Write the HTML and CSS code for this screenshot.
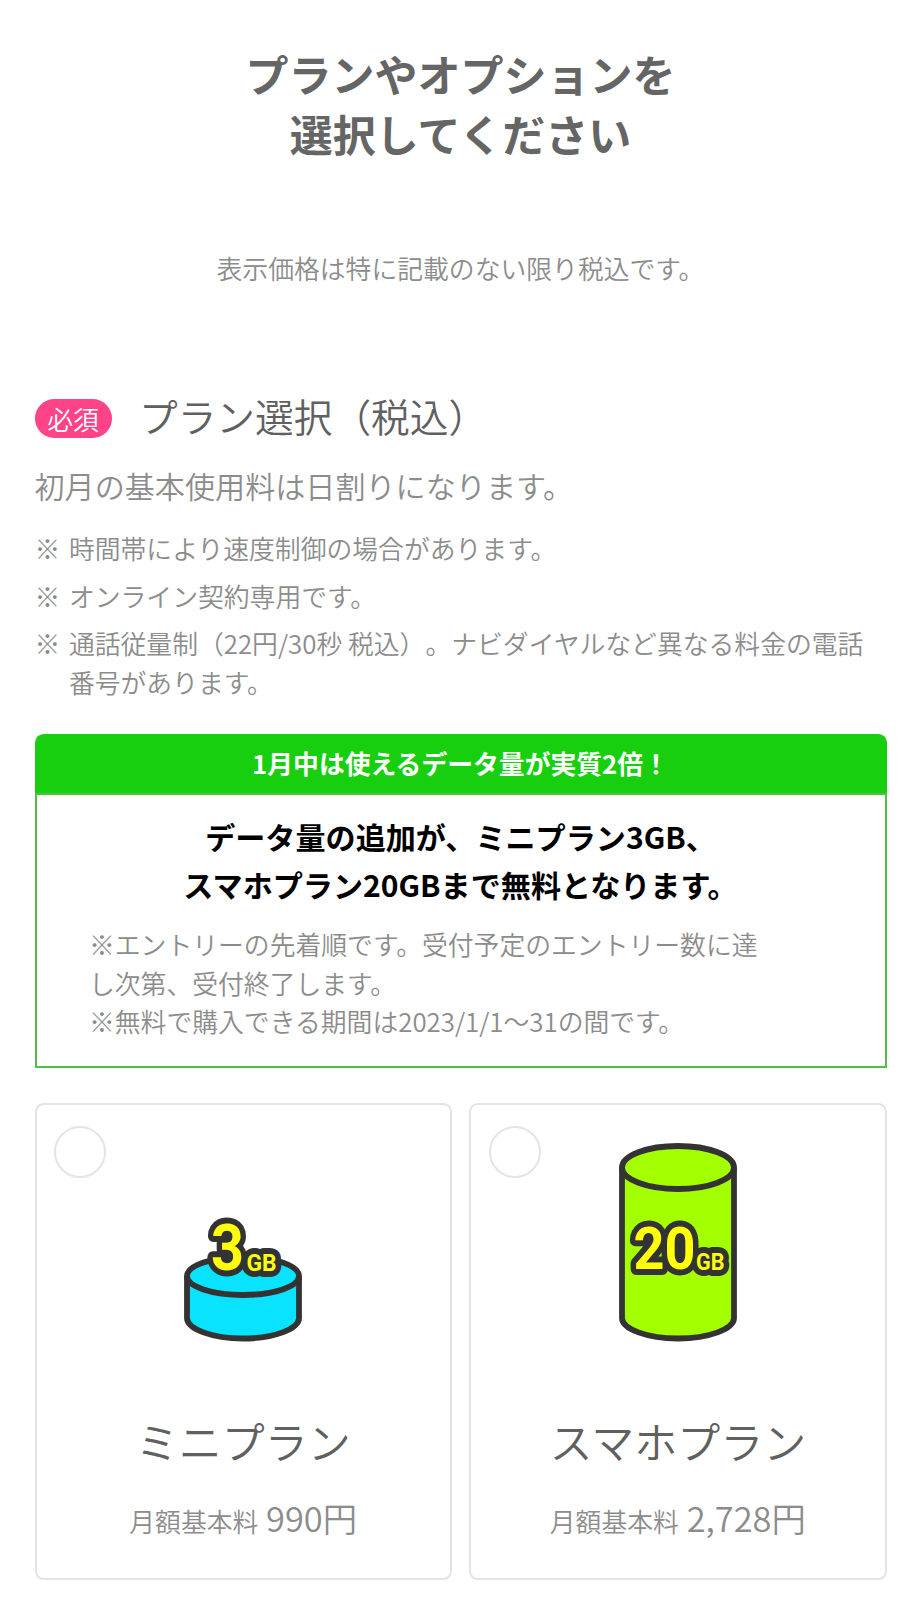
FILE: index.html
```
<!DOCTYPE html>
<html lang="ja">
<head>
    <meta charset="UTF-8">
    <meta name="viewport" content="width=device-width, initial-scale=1.0">
    <title>プラン選択</title>
    <link rel="stylesheet" href="styles.css">
</head>
<body>
    <h1>プランやオプションを<br>選択してください</h1>
    <p class="taxNote">表示価格は特に記載のない限り税込です。</p>

    <div class="heading">
        <span class="badge">必須</span>
        <h2>プラン選択（税込）</h2>
    </div>
    <p class="lead">初月の基本使用料は日割りになります。</p>
    <ul class="notes">
        <li>時間帯により速度制御の場合があります。</li>
        <li>オンライン契約専用です。</li>
        <li class="wide">通話従量制（22円/30秒 税込）。ナビダイヤルなど異なる料金の電話番号があります。</li>
    </ul>

    <div class="campaign">
        <div class="campaignTitle">1月中は使えるデータ量が実質2倍！</div>
        <div class="campaignBody">
            <p class="campaignText">データ量の追加が、ミニプラン3GB、<br>スマホプラン20GBまで無料となります。</p>
            <p class="campaignNote">※エントリーの先着順です。受付予定のエントリー数に達し次第、受付終了します。<br>※無料で購入できる期間は2023/1/1～31の間です。</p>
        </div>
    </div>

    <div class="plans">
        <div class="plan">
            <span class="radio"></span>
            <svg class="can" width="120" height="200" viewBox="0 0 120 200">
                <path class="mini" d="M4 133V175C4 186 29 195.500 60 195.500S116 186 116 175V133"/>
                <ellipse class="mini" cx="60" cy="133" rx="56" ry="19"/>
                <!-- thick outline behind the yellow letters -->
                <use href="#size3" class="outline"/>
                <g id="size3" class="size">
                    <text x="28" y="127" font-size="64" textLength="33" lengthAdjust="spacingAndGlyphs">3</text>
                    <text x="63.500" y="128" font-size="23.500" textLength="30" lengthAdjust="spacingAndGlyphs">GB</text>
                </g>
            </svg>
            <h3>ミニプラン</h3>
            <p class="price">月額基本料 <span>990円</span></p>
        </div>
        <div class="plan">
            <span class="radio"></span>
            <svg class="can" width="120" height="200" viewBox="0 0 120 200">
                <path class="sumaho" d="M4 24.500V175C4 186 29 195.500 60 195.500S116 186 116 175V24.500"/>
                <ellipse class="sumaho" cx="60" cy="24.500" rx="56" ry="21.500"/>
                <use href="#size20" class="outline"/>
                <g id="size20" class="size">
                    <text x="15.500" y="126" font-size="58.500" textLength="62" lengthAdjust="spacingAndGlyphs">20</text>
                    <text x="78" y="126.500" font-size="23" textLength="28.500" lengthAdjust="spacingAndGlyphs">GB</text>
                </g>
            </svg>
            <h3>スマホプラン</h3>
            <p class="price">月額基本料 <span>2,728円</span></p>
        </div>
    </div>
</body>
</html>
```
FILE: styles.css
```
*{
    margin: 0;
    padding: 0;
    box-sizing: border-box;
}
body{
    padding: 43px 34.500px 0;
    height: 1600px;
    overflow: hidden;
    background-color: white;
    color: #8c8c8c;
    font-family: "Noto Sans CJK JP", sans-serif;
    font-size: 25.82px;
    font-weight: 350;
    line-height: 38.7px;
}
h1{
    color: #656565;
    font-size: 43px;
    font-weight: 700;
    line-height: 60.3px;
    text-align: center;
}
.taxNote{
    margin-top: 85px;
    text-align: center;
}
.heading{
    display: flex;
    align-items: center;
    margin-top: 102px;
    height: 58px;
}
.badge{
    width: 77px;
    height: 39px;
    border-radius: 20px;
    background-color: #ff4388;
    color: white;
    line-height: 39px;
    text-align: center;
}
h2{
    margin-left: 27.500px;
    padding-bottom: 6px;
    color: #606060;
    font-size: 38.7px;
    font-weight: 350;
    line-height: 52px;
}
.lead{
    margin-top: 16px;
    font-size: 30.1px;
    line-height: 45px;
}
.notes{
    list-style-type: none;
    margin-top: 21px;
}
.notes li{
    display: flex;
    margin-bottom: 8.6px;
}
.notes li::before{
    content: "※";
    flex: 0 0 34.4px;
}
.notes .wide{
    text-spacing-trim: space-all;
}
.campaign{
    margin-top: 33px;
}
.campaignTitle{
    height: 59px;
    border-radius: 8.6px 8.6px 0 0;
    background-color: #17cf0f;
    color: white;
    font-weight: 700;
    line-height: 57px;
    text-align: center;
}
.campaignBody{
    height: 275px;
    border: 2px solid #4fbf45;
    padding-top: 18px;
}
.campaignText{
    color: black;
    font-size: 30.1px;
    font-weight: 700;
    line-height: 47.3px;
    text-align: center;
}
.campaignNote{
    width: 682px;
    margin: 17px 0 0 52.500px;
}
.plans{
    display: grid;
    grid-template-columns: 1fr 1fr;
    gap: 17.2px;
    margin-top: 34.500px;
}
.plan{
    position: relative;
    height: 477px;
    border: 2px solid #e4e4e4;
    border-radius: 8.6px;
    padding-top: 38px;
    text-align: center;
}
.radio{
    position: absolute;
    top: 21px;
    left: 17.500px;
    width: 52px;
    height: 52px;
    border: 2px solid #e4e4e4;
    border-radius: 50%;
}
.can{
    display: block;
    margin: 0 auto;
}
.mini,
.sumaho{
    stroke: #333;
    stroke-width: 5.800px;
}
.mini{
    fill: #0ae3ff;
}
.sumaho{
    fill: #a4ff00;
}
.size{
    fill: #ffff0a;
    font-family: Roboto, sans-serif;
    font-weight: 700;
}
.outline{
    stroke: #333;
    stroke-width: 12px;
    stroke-linejoin: round;
}
h3{
    margin-top: 65px;
    color: #606060;
    font-size: 43px;
    font-weight: 350;
    line-height: 64px;
}
.price{
    margin-top: 19px;
    line-height: 52px;
}
.price span{
    margin-left: 2px;
    font-size: 34.4px;
}
```
